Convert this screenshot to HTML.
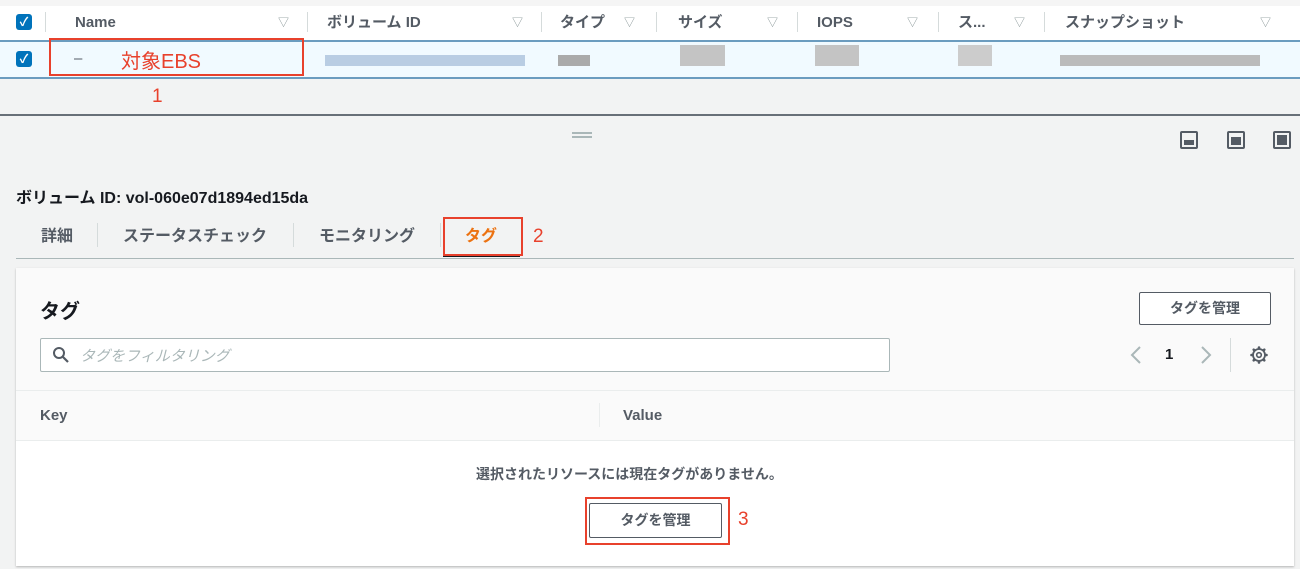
<!DOCTYPE html>
<html><head><meta charset="utf-8"><style>
*{margin:0;padding:0;box-sizing:border-box}
body{width:1300px;height:569px;overflow:hidden;background:#f2f3f3;position:relative;font-family:"Liberation Sans","Noto Sans CJK JP",sans-serif;color:#16191f}
.a{position:absolute;white-space:nowrap}
.b{font-weight:bold}
.h{font-size:15px;font-weight:bold;color:#545b64;top:13px;line-height:20px}
.f{font-size:11px;color:#879596;top:15px;line-height:16px}
.sep{position:absolute;width:1px;background:#d5dbdb}
.blur{position:absolute;background:#c9ccd0}
.cb{position:absolute;width:16px;height:16px;background:#0073bb;border-radius:3px;color:#fff;font-size:12px;line-height:16px;text-align:center;font-weight:bold}
.red{position:absolute;border:2px solid #e8412c}
.btn{position:absolute;border:1.5px solid #545b64;border-radius:2px;background:#fff;font-size:14px;font-weight:bold;color:#545b64;text-align:center}
.ic{position:absolute;width:18px;height:18px;border:2px solid #545b64;border-radius:2px;top:131px}
.ic i{position:absolute;left:2px;right:2px;bottom:2px;background:#545b64}
.t{font-size:16px;color:#545b64;line-height:22px;top:226px}
</style></head><body>
<div class="a" style="left:0;top:0;width:1300px;height:40px;background:#fff;border-top:6px solid #f5f5f5"></div>
<div class="cb" style="left:16px;top:14px">✓</div>
<div class="sep" style="left:45px;top:12px;height:20px"></div>
<div class="a h" style="left:75px">Name</div><div class="a f" style="left:278px">▽</div>
<div class="sep" style="left:307px;top:12px;height:20px"></div>
<div class="a h" style="left:327px">ボリューム ID</div><div class="a f" style="left:512px">▽</div>
<div class="sep" style="left:541px;top:12px;height:20px"></div>
<div class="a h" style="left:560px">タイプ</div><div class="a f" style="left:624px">▽</div>
<div class="sep" style="left:656px;top:12px;height:20px"></div>
<div class="a h" style="left:678px">サイズ</div><div class="a f" style="left:767px">▽</div>
<div class="sep" style="left:797px;top:12px;height:20px"></div>
<div class="a h" style="left:817px">IOPS</div><div class="a f" style="left:907px">▽</div>
<div class="sep" style="left:938px;top:12px;height:20px"></div>
<div class="a h" style="left:958px">ス...</div><div class="a f" style="left:1014px">▽</div>
<div class="sep" style="left:1044px;top:12px;height:20px"></div>
<div class="a h" style="left:1065px">スナップショット</div><div class="a f" style="left:1260px">▽</div>
<div class="a" style="left:0;top:40px;width:1300px;height:39px;background:#f1faff;border-top:2px solid #6b9cbf;border-bottom:2px solid #6b9cbf"></div>
<div class="cb" style="left:16px;top:51px">✓</div>
<div class="a" style="left:74px;top:50px;font-size:15px;color:#545b64">–</div>
<div class="a" style="left:121px;top:45px;font-size:20px;color:#e8412c">対象EBS</div>
<div class="red" style="left:49px;top:38px;width:255px;height:38px"></div>
<div class="blur" style="left:325px;top:55px;width:200px;height:11px;background:#b9cde3"></div>
<div class="blur" style="left:558px;top:55px;width:32px;height:11px;background:#aaa"></div>
<div class="blur" style="left:680px;top:45px;width:45px;height:21px;background:#c4c4c4"></div>
<div class="blur" style="left:815px;top:45px;width:44px;height:21px;background:#c4c4c4"></div>
<div class="blur" style="left:958px;top:45px;width:34px;height:21px;background:#ccc"></div>
<div class="blur" style="left:1060px;top:55px;width:200px;height:11px;background:#bbb"></div>
<div class="a" style="left:152px;top:86px;font-size:19px;color:#e8412c">1</div>
<div class="a" style="left:0;top:114px;width:1300px;height:2px;background:#687078"></div>
<div class="a" style="left:572px;top:132px;width:20px;height:2px;background:#aab7b8;box-shadow:0 4px 0 #aab7b8"></div>
<div class="ic" style="left:1180px"><i style="height:5px"></i></div>
<div class="ic" style="left:1227px"><i style="height:8px"></i></div>
<div class="ic" style="left:1273px"><i style="top:2px"></i></div>
<div class="a b" style="left:16px;top:184px;font-size:16px">ボリューム ID: vol-060e07d1894ed15da</div>
<div class="a b t" style="left:41px">詳細</div>
<div class="sep" style="left:97px;top:223px;height:24px"></div>
<div class="a b t" style="left:123px">ステータスチェック</div>
<div class="sep" style="left:293px;top:223px;height:24px"></div>
<div class="a b t" style="left:319px">モニタリング</div>
<div class="sep" style="left:440px;top:223px;height:24px"></div>
<div class="a b t" style="left:465px;color:#ec7211">タグ</div>
<div class="a" style="left:443px;top:254px;width:77px;height:3px;background:#16191f"></div>
<div class="red" style="left:443px;top:217px;width:80px;height:39px"></div>
<div class="a" style="left:533px;top:226px;font-size:19px;color:#e8412c">2</div>
<div class="a" style="left:16px;top:258px;width:1278px;height:1px;background:#aab7b8"></div>
<div class="a" style="left:16px;top:268px;width:1278px;height:298px;background:#fafafa;box-shadow:0 1px 2px rgba(0,0,0,.25)"></div>
<div class="a b" style="left:40px;top:295px;font-size:20px">タグ</div>
<div class="btn" style="left:1139px;top:292px;width:132px;height:33px;line-height:30px">タグを管理</div>
<div class="a" style="left:40px;top:338px;width:850px;height:34px;background:#fff;border:1px solid #aab7b8;border-radius:2px"></div>
<svg class="a" style="left:52px;top:346px" width="18" height="18" viewBox="0 0 18 18"><circle cx="7" cy="7" r="5" fill="none" stroke="#545b64" stroke-width="2"/><path d="M11 11l5 5" stroke="#545b64" stroke-width="2.2"/></svg>
<div class="a" style="left:80px;top:345px;font-size:15px;font-style:italic;color:#aab7b8">タグをフィルタリング</div>
<svg class="a" style="left:1129px;top:345px" width="14" height="20"><path d="M11 2L3 10l8 8" fill="none" stroke="#aab7b8" stroke-width="2"/></svg>
<div class="a b" style="left:1165px;top:346px;font-size:15px">1</div>
<svg class="a" style="left:1199px;top:345px" width="14" height="20"><path d="M3 2l8 8-8 8" fill="none" stroke="#aab7b8" stroke-width="2"/></svg>
<div class="sep" style="left:1230px;top:338px;height:34px"></div>
<svg class="a" style="left:1249px;top:345px" width="20" height="20" viewBox="0 0 20 20"><g stroke="#545b64" stroke-width="2.6" stroke-linecap="round"><path d="M10 2.5v1.5M10 16v1.5M2.5 10h1.5M16 10h1.5M4.7 4.7l1 1M14.3 14.3l1 1M4.7 15.3l1-1M14.3 5.7l1-1"/></g><circle cx="10" cy="10" r="6" fill="#fafafa" stroke="#545b64" stroke-width="1.8"/><circle cx="10" cy="10" r="2.3" fill="none" stroke="#545b64" stroke-width="1.6"/></svg>
<div class="a" style="left:16px;top:390px;width:1278px;height:1px;background:#eaeded"></div>
<div class="a b" style="left:40px;top:407px;font-size:15px;color:#545b64">Key</div>
<div class="sep" style="left:599px;top:403px;height:24px;background:#eaeded"></div>
<div class="a b" style="left:623px;top:407px;font-size:15px;color:#545b64">Value</div>
<div class="a" style="left:16px;top:440px;width:1278px;height:126px;background:#fff;border-top:1px solid #eaeded"></div>
<div class="a b" style="left:476px;top:464px;font-size:14px;color:#545b64">選択されたリソースには現在タグがありません。</div>
<div class="btn" style="left:589px;top:503px;width:133px;height:35px;line-height:32px">タグを管理</div>
<div class="red" style="left:585px;top:497px;width:145px;height:48px"></div>
<div class="a" style="left:738px;top:509px;font-size:19px;color:#e8412c">3</div>
</body></html>
